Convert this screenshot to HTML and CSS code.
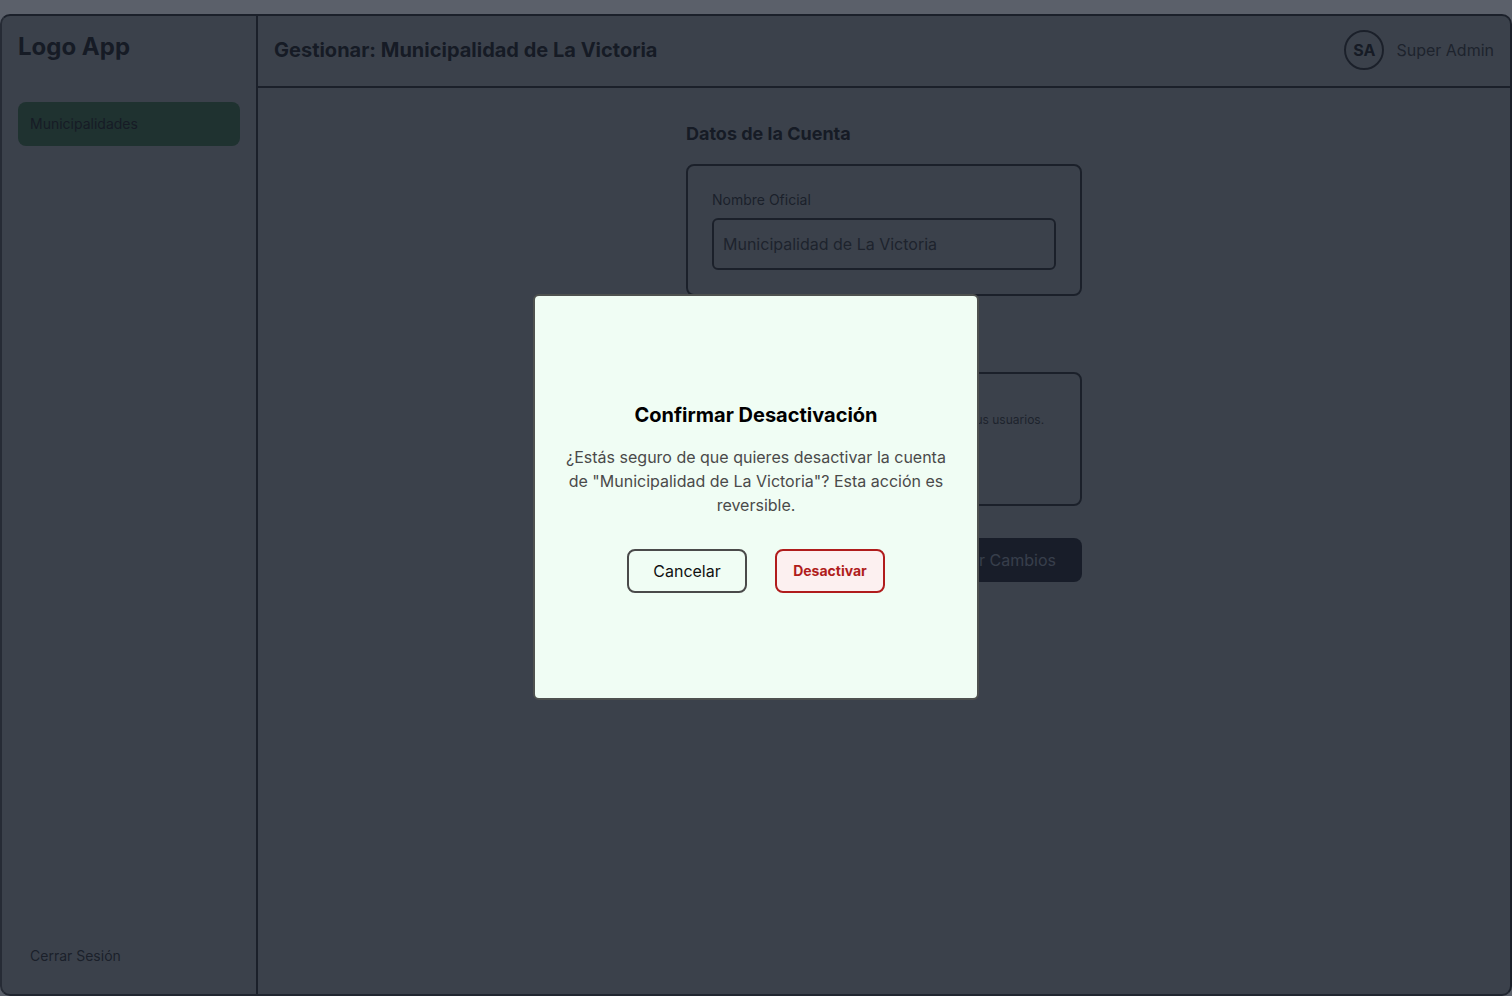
FILE: index.html
```html
<!DOCTYPE html>
<html lang="es">
<head>
<meta charset="utf-8">
<title>Gestionar Municipalidad</title>
<link rel="stylesheet" href="styles.css">
</head>
<body>
<div class="frame">
  <aside class="sidebar">
    <div class="logo">Logo App</div>
    <nav class="nav">
      <a class="nav-item active">Municipalidades</a>
    </nav>
    <a class="logout">Cerrar Sesión</a>
  </aside>
  <div class="main">
    <header class="topbar">
      <h1 class="page-title">Gestionar: Municipalidad de La Victoria</h1>
      <div class="user">
        <span class="avatar">SA</span>
        <span class="user-name">Super Admin</span>
      </div>
    </header>
    <div class="content">
      <div class="column">
        <section class="section">
          <h2 class="section-title">Datos de la Cuenta</h2>
          <div class="card">
            <label class="field-label">Nombre Oficial</label>
            <div class="input">Municipalidad de La Victoria</div>
          </div>
        </section>
        <section class="section">
          <h2 class="section-title">Estado de la Cuenta</h2>
          <div class="card">
            <div class="field-label tight">Cuenta Activa</div>
            <div class="field-help">Una cuenta desactivada bloquea el acceso a sus usuarios.</div>
            <div class="toggle-row">
              <span class="toggle"><span class="knob"></span></span>
              <span class="toggle-label">Activa</span>
            </div>
          </div>
        </section>
        <div class="actions">
          <button class="save-btn">Guardar Cambios</button>
        </div>
      </div>
    </div>
  </div>
</div>

<div class="overlay">
  <div class="modal">
    <h3 class="modal-title">Confirmar Desactivación</h3>
    <p class="modal-text">¿Estás seguro de que quieres desactivar la cuenta de "Municipalidad de La Victoria"? Esta acción es reversible.</p>
    <div class="modal-actions">
      <button class="btn btn-cancel">Cancelar</button>
      <button class="btn btn-danger">Desactivar</button>
    </div>
  </div>
</div>
</body>
</html>
```

FILE: styles.css
```css
* { box-sizing: border-box; }

html, body {
  margin: 0;
  height: 100%;
}

body {
  background: #ffffff;
  font-family: Inter, "Noto Sans", sans-serif;
  color: #222;
  padding-top: 14px;
}

.frame {
  height: calc(100vh - 14px);
  display: flex;
  background: #989c9b;
  border: 2px solid #333;
  border-left-color: #555;
  border-bottom-color: #444;
  border-radius: 10px;
  overflow: hidden;
}

/* Sidebar */
.sidebar {
  width: 256px;
  flex-shrink: 0;
  border-right: 2px solid #333;
  padding: 16px;
  display: flex;
  flex-direction: column;
}

.logo {
  font-size: 24px;
  line-height: 30px;
  font-weight: 700;
  color: #222;
}

.nav {
  margin-top: 40px;
  flex: 1;
}

.nav-item {
  display: block;
  padding: 12px 12px;
  font-size: 14px;
  line-height: 20px;
  border-radius: 8px;
  color: #222;
}

.nav-item.active {
  background: #3e6a44;
}

.logout {
  padding: 12px;
  font-size: 14px;
  line-height: 20px;
  color: #333;
}

/* Main */
.main {
  flex: 1;
  display: flex;
  flex-direction: column;
  min-width: 0;
}

.topbar {
  height: 72px;
  border-bottom: 2px solid #333;
  padding: 0 16px;
  display: flex;
  align-items: center;
  justify-content: space-between;
}

.page-title {
  margin: 0;
  font-size: 20px;
  line-height: 28px;
  font-weight: 700;
  color: #222;
  transform: translateY(-1px);
}

.user {
  display: flex;
  align-items: center;
  gap: 12px;
  transform: translateY(-1px);
}

.avatar {
  width: 40px;
  height: 40px;
  border-radius: 50%;
  border: 2px solid #333;
  display: flex;
  align-items: center;
  justify-content: center;
  font-weight: 700;
  font-size: 16px;
  color: #222;
}

.user-name {
  font-size: 16px;
  color: #3a3a3a;
}

.content {
  flex: 1;
  padding: 32px 16px;
  display: flex;
  justify-content: center;
}

.column {
  width: 396px;
  display: flex;
  flex-direction: column;
  gap: 32px;
}

.section-title {
  margin: 0 0 16px;
  font-size: 18px;
  line-height: 28px;
  font-weight: 700;
  color: #222;
}

.card {
  border: 2px solid #333;
  border-radius: 8px;
  padding: 24px;
}

.field-label {
  display: block;
  font-size: 14px;
  line-height: 20px;
  color: #333;
  margin-bottom: 8px;
}

.field-label.tight {
  line-height: 14px;
  margin-bottom: 0;
}

.input {
  height: 52px;
  border: 2px solid #333;
  border-radius: 6px;
  padding: 0 9px;
  display: flex;
  align-items: center;
  font-size: 16px;
  color: #3a3a3a;
}

.field-help {
  font-size: 12px;
  line-height: 16px;
  color: #3a3a3a;
  white-space: nowrap;
}

.toggle-row {
  margin-top: 12px;
  height: 40px;
  display: flex;
  align-items: center;
  gap: 10px;
}

.toggle {
  width: 44px;
  height: 24px;
  border-radius: 12px;
  background: #333;
  position: relative;
}

.knob {
  position: absolute;
  top: 2px;
  right: 2px;
  width: 20px;
  height: 20px;
  border-radius: 50%;
  background: #777;
}

.toggle-label {
  font-size: 14px;
  color: #3a3a3a;
}

.actions {
  display: flex;
  justify-content: flex-end;
}

.save-btn {
  height: 44px;
  padding: 0 26px;
  border: none;
  border-radius: 8px;
  background: #28282e;
  color: #8c929b;
  font-family: inherit;
  font-size: 16px;
}

/* Modal */
.overlay {
  position: fixed;
  inset: 0;
  background: rgba(17, 24, 39, 0.69);
  display: flex;
  align-items: center;
  justify-content: center;
}

.modal {
  width: 446px;
  height: 406px;
  margin-top: -3px;
  background: #f0fdf4;
  border: 2px solid #4e514f;
  border-radius: 6px;
  padding: 24px;
  display: flex;
  flex-direction: column;
  align-items: center;
  justify-content: center;
  text-align: center;
}

.modal-title {
  margin: 0;
  font-size: 20px;
  line-height: 28px;
  font-weight: 700;
  color: #000;
}

.modal-text {
  margin: 16px 0 0;
  font-size: 16px;
  line-height: 24px;
  color: #4a4a4a;
}

.modal-actions {
  margin-top: 32px;
  display: flex;
  gap: 28px;
}

.btn {
  height: 44px;
  border-radius: 8px;
  font-family: inherit;
  cursor: pointer;
}

.btn-cancel {
  width: 120px;
  background: transparent;
  border: 2px solid #4a4a4a;
  color: #111;
  font-size: 16px;
}

.btn-danger {
  width: 110px;
  background: #fcf0f0;
  border: 2px solid #b01c1c;
  color: #b01c1c;
  font-size: 14px;
  font-weight: 700;
}
```
